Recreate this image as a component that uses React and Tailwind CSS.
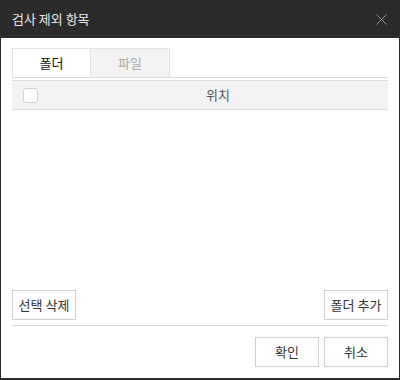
import { useState } from 'react';

const font = { fontFamily: '"Noto Sans CJK KR", "Noto Sans", sans-serif' };

const Btn = ({ children }) => (
  <button className="h-[30px] w-[64px] border border-[#cfcfcf] bg-white text-[13px] text-[#333]">
    {children}
  </button>
);

export default function App() {
  const [tab, setTab] = useState('folder');

  return (
    <div className="flex h-[380px] w-[400px] flex-col bg-[#2b2b2b] px-px pb-[2px]" style={font}>
      <div className="flex h-[38px] shrink-0 items-center justify-between pl-[11px] pr-[12px]">
        <span className="text-[13px] text-[#e6e6e6]">검사 제외 항목</span>
        <svg width="11" height="11" viewBox="0 0 11 11" className="text-[#9a9a9a]">
          <path d="M0.5 0.5L10.5 10.5M10.5 0.5L0.5 10.5" stroke="currentColor" strokeWidth="1" />
        </svg>
      </div>

      <div className="flex flex-1 flex-col bg-white px-[11px] pt-[10px]">
        <div className="flex border-b border-[#dcdcdc]">
          <button
            onClick={() => setTab('folder')}
            className={`h-[29px] w-[79px] border border-b-0 border-[#e2e2e2] text-[13px] ${
              tab === 'folder' ? 'bg-white text-[#111]' : 'bg-[#f3f3f3] text-[#aaa]'
            }`}
          >
            폴더
          </button>
          <button
            onClick={() => setTab('file')}
            className={`h-[29px] w-[79px] border border-b-0 border-l-0 border-[#e2e2e2] text-[13px] ${
              tab === 'file' ? 'bg-white text-[#111]' : 'bg-[#f3f3f3] text-[#aaa]'
            }`}
          >
            파일
          </button>
        </div>

        <div className="mt-[2px] flex h-[30px] items-center border-y border-[#dcdcdc] bg-[#f3f3f3]">
          <div className="flex w-[36px] shrink-0 justify-end pr-[10px]">
            <span className="h-[15px] w-[15px] rounded-[3px] border border-[#cfcfcf] bg-white" />
          </div>
          <span className="flex-1 text-center text-[13px] text-[#555]">위치</span>
        </div>

        <div className="flex-1" />

        <div className="flex items-center justify-between">
          <Btn>선택 삭제</Btn>
          <Btn>폴더 추가</Btn>
        </div>
        <div className="mt-[5px] border-t border-[#dcdcdc]" />
        <div className="flex justify-end gap-[5px] pb-[11px] pt-[11px]">
          <Btn>확인</Btn>
          <Btn>취소</Btn>
        </div>
      </div>
    </div>
  );
}
